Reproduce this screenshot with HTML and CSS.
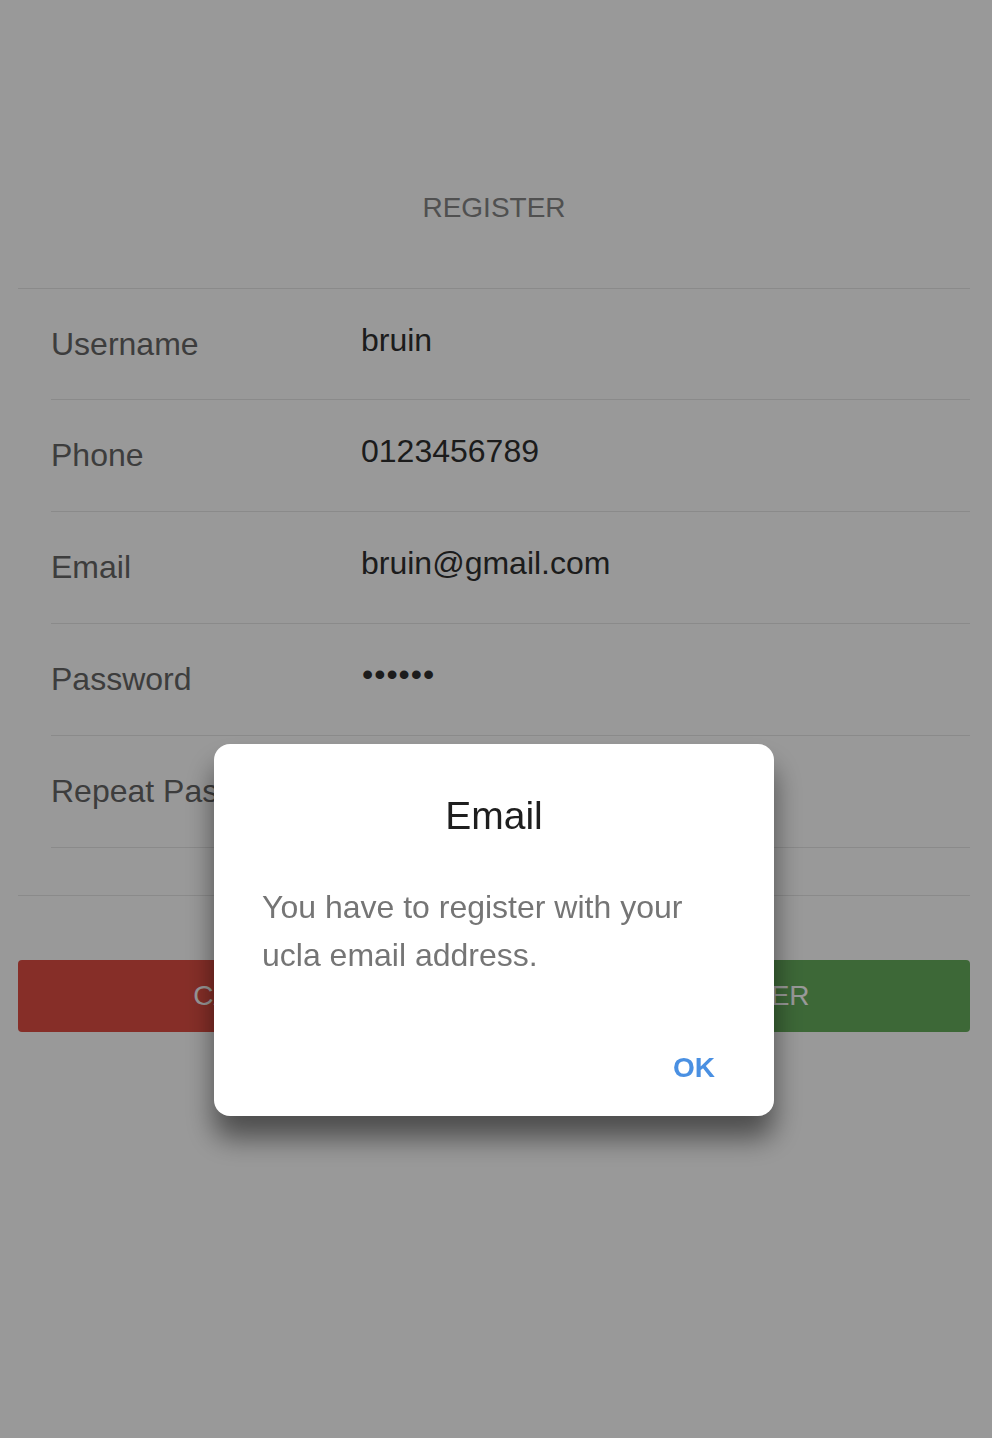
FILE: index.html
```html
<!DOCTYPE html>
<html>
<head>
<meta charset="utf-8">
<link rel="stylesheet" href="styles.css">
</head>
<body>
<div class="page">
  <header class="header"><h1 class="title">REGISTER</h1></header>
  <div class="form">
    <div class="row"><span class="label">Username</span><span class="value">bruin</span></div>
    <div class="row"><span class="label">Phone</span><span class="value">0123456789</span></div>
    <div class="row"><span class="label">Email</span><span class="value">bruin@gmail.com</span></div>
    <div class="row"><span class="label">Password</span><span class="value dots">••••••</span></div>
    <div class="row"><span class="label">Repeat Password</span><span class="value dots">••••••</span></div>
  </div>
  <div class="actions">
    <button class="btn btn-cancel">CANCEL</button>
    <button class="btn btn-register">REGISTER</button>
  </div>
</div>
<div class="overlay">
  <div class="modal">
    <h2 class="modal-title">Email</h2>
    <p class="modal-body">You have to register with your ucla email address.</p>
    <div class="modal-footer"><button class="ok">OK</button></div>
  </div>
</div>
</body>
</html>
```
FILE: styles.css
```css
html, body {
  margin: 0;
  padding: 0;
  background: #fff;
  font-family: "Liberation Sans", Arial, Helvetica, sans-serif;
}
.page {
  min-height: 1438px;
  padding: 0 22px 0 18px;
}
.header {
  padding: 184px 0 56px;
  text-align: center;
}
.title {
  margin: 0;
  font-size: 28px;
  line-height: 48px;
  font-weight: normal;
  color: #858585;
}
.form {
  border-top: 1px solid #e6e6e6;
  border-bottom: 1px solid #e6e6e6;
  padding: 0 0 47px 33px;
}
.row {
  display: flex;
  align-items: center;
  height: 111px;
  border-bottom: 1px solid #e6e6e6;
}
.row:first-child {
  height: 110px;
}
.label {
  width: 310px;
  flex: none;
  font-size: 32px;
  color: #666;
}
.value {
  font-size: 32px;
  color: #303030;
  margin-bottom: 8px;
}
.dots {
  font-size: 32px;
  letter-spacing: 1px;
  margin-bottom: 10px;
  padding-left: 1px;
}
.actions {
  display: flex;
  gap: 24px;
  margin-top: 64px;
}
.btn {
  flex: 1;
  height: 72px;
  border: none;
  border-radius: 4px;
  color: #fff;
  font-family: inherit;
  font-size: 28px;
}
.btn-cancel { background: #df4e43; }
.btn-register { background: #66ad5d; }

.overlay {
  position: fixed;
  inset: 0;
  background: rgba(0, 0, 0, 0.4);
  display: flex;
  justify-content: center;
  align-items: flex-start;
  padding: 744px 4px 0 0;
}
.modal {
  width: 560px;
  box-sizing: border-box;
  background: #fff;
  border-radius: 16px;
  padding: 48px 48px 28px;
  box-shadow: 0 22px 28px rgba(0, 0, 0, 0.5);
}
.modal-title {
  margin: 0;
  text-align: center;
  font-size: 39px;
  line-height: 48px;
  font-weight: normal;
  color: #1e1e1e;
}
.modal-body {
  margin: 43px 0 0;
  font-size: 32px;
  line-height: 48px;
  color: #757575;
}
.modal-footer {
  display: flex;
  justify-content: flex-end;
  margin-top: 69px;
  padding-right: 11px;
}
.ok {
  border: none;
  background: none;
  padding: 0;
  font-family: inherit;
  font-size: 28px;
  line-height: 40px;
  font-weight: bold;
  color: #4a90e2;
}
```
